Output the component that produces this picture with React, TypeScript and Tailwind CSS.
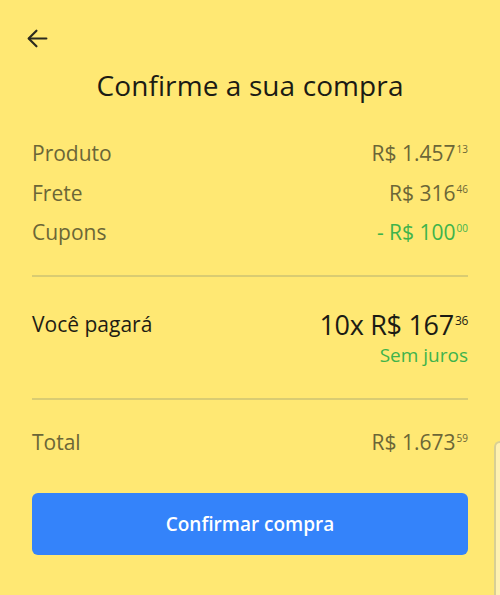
import React from "react";

function Price({ main, cents, className = "", supClass = "" }: { main: string; cents: string; className?: string; supClass?: string }) {
  return (
    <span className={`inline-flex items-start whitespace-nowrap ${className}`}>
      <span>{main}</span>
      <span className={`ml-[1px] leading-none ${supClass}`}>{cents}</span>
    </span>
  );
}

export default function App() {
  return (
    <div
      className="relative w-[500px] h-[595px] overflow-hidden bg-[#ffe873]"
      style={{ fontFamily: "'Open Sans', 'Liberation Sans', sans-serif" }}
    >
      <div className="px-[32px]">
        <div className="h-[70px] pt-[26px] -ml-[7px]">
          <svg width="25" height="25" viewBox="0 0 24 24" fill="none" stroke="#2b2a1e" strokeWidth="2.1" strokeLinecap="round" strokeLinejoin="round">
            <path d="M20.5 12H4" />
            <path d="M11 4.5L3.5 12l7.5 7.5" />
          </svg>
        </div>
        <h1 className="text-center text-[28px] leading-[30px] text-[#1b1b14] tracking-[0.1px] mb-[34px]">
          Confirme a sua compra
        </h1>

        <div className="flex flex-col text-[21px] text-[#6b6637]">
          <div className="flex justify-between items-center h-[40px]">
            <span>Produto</span>
            <Price main="R$ 1.457" cents="13" supClass="text-[10px] mt-[6px]" />
          </div>
          <div className="flex justify-between items-center h-[39px]">
            <span>Frete</span>
            <Price main="R$ 316" cents="46" supClass="text-[10px] mt-[6px]" />
          </div>
          <div className="flex justify-between items-center h-[40px]">
            <span>Cupons</span>
            <Price main="- R$ 100" cents="00" className="text-[#3eb34b]" supClass="text-[10px] mt-[6px]" />
          </div>
        </div>

        <div className="mt-[22px] h-[2px] bg-[#d9cc72]" />

        <div className="flex justify-between items-start pt-[33px] h-[121px]">
          <span className="text-[21px] text-[#1e1d14] leading-[28px]">Você pagará</span>
          <div className="flex flex-col items-end">
            <Price main="10x R$ 167" cents="36" className="text-[27px] leading-[30px] text-[#1b1b14] tracking-[-0.3px]" supClass="text-[12px] mt-[5px]" />
            <span className="text-[19px] text-[#3eb34b] mt-[3px] leading-[24px]">Sem juros</span>
          </div>
        </div>

        <div className="h-[2px] bg-[#d9cc72]" />

        <div className="flex justify-between items-center h-[86px] text-[21px] text-[#6b6637]">
          <span>Total</span>
          <Price main="R$ 1.673" cents="59" supClass="text-[10px] mt-[6px]" />
        </div>

        <button className="mt-[7px] w-full h-[62px] rounded-[6px] bg-[#3483fa] text-white text-[19px] font-semibold">
          Confirmar compra
        </button>
      </div>

      <div className="absolute left-[494px] top-[441px] w-[20px] h-[200px] rounded-tl-[6px] border-l-2 border-t-2 border-[#d8cf95] bg-[#fff1b0]" />
    </div>
  );
}
